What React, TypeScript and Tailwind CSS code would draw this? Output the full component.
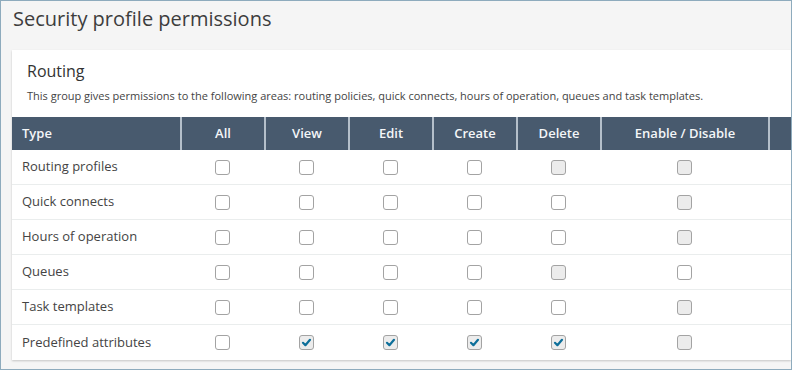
import { type ReactNode } from 'react'

type Box = 'off' | 'dis' | 'on'

interface Row {
  label: string
  boxes: Box[]
}

const columns = ['All', 'View', 'Edit', 'Create', 'Delete', 'Enable / Disable']

const rows: Row[] = [
  { label: 'Routing profiles', boxes: ['off', 'off', 'off', 'off', 'dis', 'dis'] },
  { label: 'Quick connects', boxes: ['off', 'off', 'off', 'off', 'off', 'dis'] },
  { label: 'Hours of operation', boxes: ['off', 'off', 'off', 'off', 'off', 'dis'] },
  { label: 'Queues', boxes: ['off', 'off', 'off', 'off', 'dis', 'off'] },
  { label: 'Task templates', boxes: ['off', 'off', 'off', 'off', 'off', 'dis'] },
  { label: 'Predefined attributes', boxes: ['off', 'on', 'on', 'on', 'on', 'dis'] },
]

const grid = 'grid grid-cols-[168px_84px_84px_84px_84px_84px_168px_1fr]'

function Checkbox({ state }: { state: Box }) {
  return (
    <span
      className={
        'flex h-[15px] w-[15px] items-center justify-center rounded-[3px] border border-[#a3a3a3] ' +
        (state === 'off' ? 'bg-white' : 'bg-[#ececec]')
      }
    >
      {state === 'on' ? (
        <svg width="11" height="11" viewBox="0 0 11 11">
          <path d="M2 5.8 L4.4 8.2 L9 2.8" fill="none" stroke="#0d6f9a" strokeWidth="2.2" strokeLinecap="round" strokeLinejoin="round" />
        </svg>
      ) : null}
    </span>
  )
}

function HeadCell({ children, first }: { children?: ReactNode; first?: boolean }) {
  return (
    <div
      className={
        'flex h-[33px] items-center text-[13px] font-semibold text-[#f4f6f8] ' +
        (first ? 'pl-[10px]' : 'justify-center border-l-2 border-[#b4bfca]')
      }
    >
      {children}
    </div>
  )
}

export default function App() {
  return (
    <div
      className="h-[370px] w-[792px] overflow-hidden border border-[#8eabbd] bg-[#f5f5f5]"
      style={{ fontFamily: '"Open Sans", "Liberation Sans", sans-serif' }}
    >
      <h1 className="pl-[12px] pt-[4px] text-[20px] leading-[28px] text-[#3d3d3d]">Security profile permissions</h1>
      <div className="ml-[11px] mt-[17px] bg-white shadow-[0_1px_2px_rgba(0,0,0,0.2)]">
        <div className="px-[15px] pb-[13px] pt-[9px]">
          <h2 className="text-[16px] leading-[24px] text-[#333]">Routing</h2>
          <p className="mt-[5px] text-[11px] leading-[16px] text-[#444]">
            This group gives permissions to the following areas: routing policies, quick connects, hours of operation, queues and task templates.
          </p>
        </div>
        <div className={grid + ' bg-[#485a6e]'}>
          <HeadCell first>Type</HeadCell>
          {columns.map((col) => (
            <HeadCell key={col}>{col}</HeadCell>
          ))}
          <HeadCell />
        </div>
        {rows.map((row, i) => (
          <div
            key={row.label}
            className={grid + ' h-[35px] items-center' + (i < rows.length - 1 ? ' border-b border-[#eaeded]' : '')}
          >
            <div className="pl-[10px] text-[13px] text-[#444]">{row.label}</div>
            {row.boxes.map((b, j) => (
              <div key={j} className="flex justify-center">
                <Checkbox state={b} />
              </div>
            ))}
            <div />
          </div>
        ))}
      </div>
    </div>
  )
}
